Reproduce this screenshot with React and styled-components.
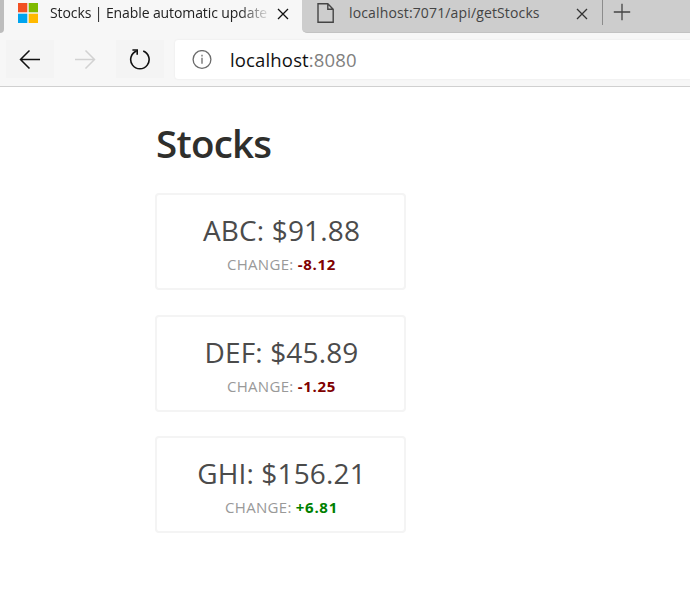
import React from "react";
import styled, { createGlobalStyle } from "styled-components";

const stocks = [
  { symbol: "ABC", price: "91.88", change: "-8.12" },
  { symbol: "DEF", price: "45.89", change: "-1.25" },
  { symbol: "GHI", price: "156.21", change: "+6.81" }
];

const CloseIcon = ({ color }) => (
  <svg width="12" height="12" viewBox="0 0 12 12" stroke={color} strokeWidth="1.3">
    <path d="M1 1l10 10M11 1L1 11" />
  </svg>
);

const WindowsLogo = () => (
  <svg width="20" height="20" viewBox="0 0 20 20">
    <path fill="#f25022" d="M0 0h9.3v9.3H0z" />
    <path fill="#7fba00" d="M10.7 0H20v9.3h-9.3z" />
    <path fill="#00a4ef" d="M0 10.7h9.3V20H0z" />
    <path fill="#ffb900" d="M10.7 10.7H20V20h-9.3z" />
  </svg>
);

const PageIcon = () => (
  <svg width="18" height="20" viewBox="0 0 18 20" fill="none" stroke="#444" strokeWidth="1.4">
    <path d="M1 .8h9.8l5.4 5.4v13H1zM10.8.8v5.4h5.4" />
  </svg>
);

const Arrow = ({ color, flip }) => (
  <svg width="22" height="20" viewBox="0 0 22 20" fill="none" stroke={color} strokeWidth="1.5">
    <path d={flip ? "M1 10.5h19M11.5 1.5l9 9-9 9" : "M21 10.5H2M10.5 1.5l-9 9 9 9"} />
  </svg>
);

const RefreshIcon = () => (
  <svg width="22" height="22" viewBox="0 0 22 22" fill="none" stroke="#111" strokeWidth="1.6">
    <path d="M14.2 3A9.2 9.2 0 1 1 7.6 3" />
    <path d="M3.4 2h4.8v4.8" />
  </svg>
);

const InfoIcon = () => (
  <svg width="20" height="20" viewBox="0 0 20 20" fill="none" stroke="#6b6b6b" strokeWidth="1.3">
    <circle cx="10" cy="9.5" r="8.9" />
    <path d="M10 7.8v6M10 4.8v1.6" />
  </svg>
);

const PlusIcon = () => (
  <svg width="18" height="18" viewBox="0 0 18 18" stroke="#444" strokeWidth="1.3">
    <path d="M9 .8v16.4M.8 9h16.4" />
  </svg>
);

const StockCard = ({ symbol, price, change }) => (
  <Card>
    <Price>
      {symbol}: ${price}
    </Price>
    <Change>
      CHANGE: <Amount $up={change.startsWith("+")}>{change}</Amount>
    </Change>
  </Card>
);

const App = () => (
  <>
    <GlobalStyle />
    <TabBar>
      <TabEdge />
      <ActiveTab>
        <WindowsLogo />
        <ActiveTitle>Stocks | Enable automatic update</ActiveTitle>
        <CloseIcon color="#111" />
      </ActiveTab>
      <InactiveTabs>
        <Tab>
          <PageIcon />
          <TabTitle>localhost:7071/api/getStocks</TabTitle>
          <CloseIcon color="#333" />
        </Tab>
        <NewTab>
          <PlusIcon />
        </NewTab>
      </InactiveTabs>
    </TabBar>
    <Toolbar>
      <NavButton $filled>
        <Arrow color="#111" />
      </NavButton>
      <NavButton>
        <Arrow color="#d2d2d2" flip />
      </NavButton>
      <NavButton $filled>
        <RefreshIcon />
      </NavButton>
      <AddressBar>
        <InfoIcon />
        <Address>
          localhost<Port>:8080</Port>
        </Address>
      </AddressBar>
    </Toolbar>
    <Content>
      <Heading>Stocks</Heading>
      <CardList>
        {stocks.map(stock => (
          <StockCard key={stock.symbol} {...stock} />
        ))}
      </CardList>
    </Content>
  </>
);
export default App;

const GlobalStyle = createGlobalStyle`
  * {
    box-sizing: border-box;
  }
  body {
    margin: 0;
    background: #fff;
    font-family: "Open Sans", "Noto Sans", sans-serif;
    overflow: hidden;
  }
  svg {
    flex: none;
    display: block;
  }
`;

const TabBar = styled.div`
  display: flex;
  height: 33px;
  background: #f7f7f7;
`;
const TabEdge = styled.div`
  width: 4px;
  background: #bdbdbd;
  border-bottom-right-radius: 4px;
`;
const ActiveTab = styled.div`
  display: flex;
  width: 298px;
  padding: 3px 13px 0 14px;
  background: #f7f7f7;
  color: #222;

  svg:last-child {
    margin-top: 5px;
  }
`;
const TabTitle = styled.div`
  width: 227px;
  margin-left: 14px;
  font-size: 14px;
  line-height: 20px;
  white-space: nowrap;
  letter-spacing: 0.14px;
`;
const ActiveTitle = styled(TabTitle)`
  width: 221px;
  margin: 0 6px 0 12px;
  letter-spacing: -0.1px;
  mask-image: linear-gradient(to right, #000 190px, transparent 221px);
`;
const InactiveTabs = styled.div`
  display: flex;
  flex: 1;
  background: #cdcdcd;
  border-bottom: 1px solid #c2c2c2;
  border-bottom-left-radius: 5px;
`;
const Tab = styled.div`
  display: flex;
  width: 300px;
  padding: 3px 0 0 15px;
  color: #444;

  svg:last-child {
    margin: 5px 0 0;
  }
`;
const NewTab = styled.div`
  height: 25px;
  padding: 3px 0 0 10px;
  border-left: 1px solid #8c8c8c;
`;

const Toolbar = styled.div`
  display: flex;
  height: 54px;
  padding: 7px 0 0 6px;
  background: #f7f7f7;
  border-bottom: 1px solid #d0d0d0;
`;
const NavButton = styled.div`
  display: flex;
  align-items: center;
  justify-content: center;
  width: 48px;
  height: 38px;
  margin-right: 7px;
  background: ${props => (props.$filled ? "#f4f4f4" : "transparent")};
`;
const AddressBar = styled.div`
  display: flex;
  align-items: center;
  flex: 1;
  height: 39px;
  margin-left: 4px;
  padding-left: 17px;
  background: #fff;
  border-radius: 3px 0 0 3px;
  box-shadow: 0 0 2px #e4e4e4;
`;
const Address = styled.div`
  margin-left: 18px;
  font-size: 18.5px;
  line-height: 24px;
  letter-spacing: 0.15px;
  color: #111;
`;
const Port = styled.span`
  color: #808080;
`;

const Content = styled.main`
  padding: 31px 0 0 155px;
`;
const Heading = styled.h1`
  margin: 0 0 0 1px;
  font-size: 38.5px;
  line-height: 50px;
  font-weight: 600;
  letter-spacing: -0.75px;
  color: #2f2f2c;
`;
const CardList = styled.div`
  display: grid;
  gap: 24.5px;
  margin-top: 25px;
`;
const Card = styled.div`
  width: 251px;
  height: 97px;
  padding: 15px 0 0 2px;
  border: 2px solid #f4f4f4;
  border-radius: 4px;
  text-align: center;
`;
const Price = styled.div`
  font-size: 28px;
  line-height: 40px;
  letter-spacing: 0.15px;
  color: #4b4b4b;
`;
const Change = styled.div`
  margin-top: 3px;
  font-size: 15px;
  line-height: 22px;
  letter-spacing: 0.3px;
  color: #999;
`;
const Amount = styled.strong`
  letter-spacing: 0.7px;
  color: ${props => (props.$up ? "#008000" : "#800000")};
`;
